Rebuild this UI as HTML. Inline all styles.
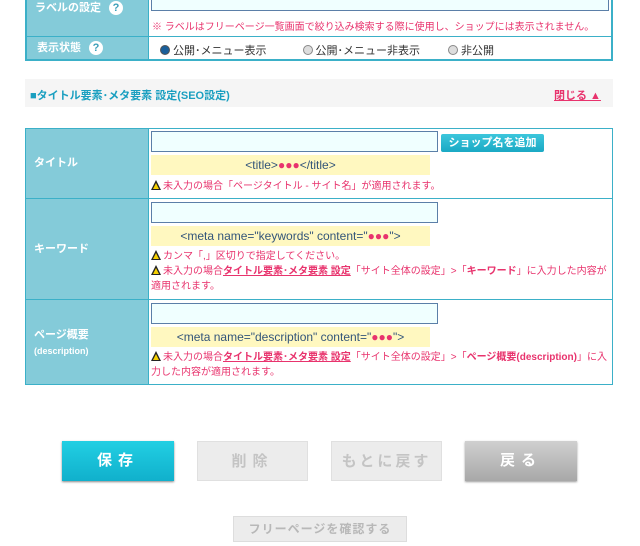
<!DOCTYPE html>
<html><head><meta charset="utf-8"><style>
*{margin:0;padding:0;box-sizing:border-box}
body{width:640px;height:546px;background:#fff;position:relative;overflow:hidden;font-family:"Liberation Sans","Noto Sans CJK JP",sans-serif;font-size:11px}
.a{position:absolute}
.lbl{background:#84cbd9;color:#fff;font-weight:bold;font-size:11px}
.q{display:inline-block;width:14px;height:14px;border-radius:50%;background:#fff;color:#3a9fb8;font-size:11px;text-align:center;line-height:14px;font-weight:bold;margin-left:8px}
.inp{background:#f0ffff;border:1px solid #5b7fa8}
.yel{background:#fff8c0;color:#33557a;font-size:12px;text-align:center;line-height:20px}
.dots{color:#e8336d}
.warn{color:#e8336d;font-size:10px;line-height:15px}
.tri{display:inline-block;width:0;height:0;border-left:5px solid transparent;border-right:5px solid transparent;border-bottom:10px solid #222;position:relative;top:1px;margin-right:2px}
.tri:after{content:"";position:absolute;left:-3px;top:3px;border-left:3px solid transparent;border-right:3px solid transparent;border-bottom:6px solid #f6d000}
u{text-decoration:underline;text-decoration-color:#e8336d;font-weight:bold}
.btn{position:absolute;height:40px;text-align:center;line-height:40px;font-size:15px;font-weight:bold;letter-spacing:6px;color:#fff}
.rad{display:inline-block;width:10px;height:10px;border-radius:50%;border:1px solid #888;background:#ddd;vertical-align:-1px;margin-right:3px}
</style></head><body>
<!-- top table -->
<div class="a" style="left:25px;top:0;width:588px;height:61px;border:2px solid #3bb0c8;border-top:none;background:#fff"></div>
<div class="a lbl" style="left:27px;top:0;width:122px;height:36px;padding:0 0 0 8px;line-height:16px">ラベルの設定<span class="q">?</span></div>
<div class="a" style="left:27px;top:36px;width:586px;height:1px;background:#3bb0c8"></div>
<div class="a lbl" style="left:27px;top:37px;width:122px;height:22px;padding-left:10px;line-height:22px">表示状態<span class="q">?</span></div>
<div class="a" style="left:148px;top:0;width:1px;height:60px;background:#3bb0c8"></div>
<div class="a inp" style="left:151px;top:-2px;width:458px;height:13px"></div>
<div class="a" style="left:152px;top:18px;color:#e8336d;font-size:10px">※ ラベルはフリーページ一覧画面で絞り込み検索する際に使用し、ショップには表示されません。</div>
<div class="a" style="left:160px;top:42px;font-size:11px;color:#333;white-space:nowrap"><span class="rad" style="background:#1a5f9a;border-color:#555"></span>公開･メニュー表示<span style="display:inline-block;width:36px"></span><span class="rad"></span>公開･メニュー非表示<span style="display:inline-block;width:28px"></span><span class="rad"></span>非公開</div>
<!-- SEO bar -->
<div class="a" style="left:25px;top:79px;width:588px;height:28px;background:#f5f5f5"></div>
<div class="a" style="left:30px;top:87px;color:#1a9fc0;font-weight:bold;font-size:11px">■タイトル要素･メタ要素 設定(SEO設定)</div>
<div class="a" style="left:554px;top:87px;color:#e8336d;font-weight:bold;font-size:11px;text-decoration:underline">閉じる ▲</div>
<!-- SEO table -->
<div class="a" style="left:25px;top:128px;width:588px;height:257px;border:1px solid #3bb0c8"></div>
<div class="a lbl" style="left:26px;top:129px;width:122px;height:69px;padding-left:8px;line-height:69px">タイトル</div>
<div class="a" style="left:26px;top:198px;width:586px;height:1px;background:#3bb0c8"></div>
<div class="a lbl" style="left:26px;top:199px;width:122px;height:100px;padding-left:8px;line-height:100px">キーワード</div>
<div class="a" style="left:26px;top:299px;width:586px;height:1px;background:#3bb0c8"></div>
<div class="a lbl" style="left:26px;top:300px;width:122px;height:84px;padding:27px 0 0 8px;line-height:16px">ページ概要<br><span style="font-size:9px">(description)</span></div>
<div class="a" style="left:148px;top:129px;width:1px;height:255px;background:#3bb0c8"></div>
<div class="a inp" style="left:151px;top:131px;width:287px;height:21px"></div>
<div class="a" style="left:441px;top:134px;width:103px;height:18px;background:linear-gradient(#3cc6dc,#1aa9c4);color:#fff;font-weight:bold;font-size:11px;text-align:center;line-height:18px;border-radius:2px">ショップ名を追加</div>
<div class="a yel" style="left:151px;top:155px;width:279px;height:20px">&lt;title&gt;<span class="dots">●●●</span>&lt;/title&gt;</div>
<div class="a warn" style="left:151px;top:179px"><span class="tri"></span>未入力の場合「ページタイトル - サイト名」が適用されます。</div>
<div class="a inp" style="left:151px;top:202px;width:287px;height:21px"></div>
<div class="a yel" style="left:151px;top:226px;width:279px;height:20px">&lt;meta name="keywords" content="<span class="dots">●●●</span>"&gt;</div>
<div class="a warn" style="left:151px;top:249px;width:460px"><span class="tri"></span>カンマ「,」区切りで指定してください。<br><span class="tri"></span>未入力の場合<u>タイトル要素･メタ要素 設定</u>「サイト全体の設定」&gt;「<b>キーワード</b>」に入力した内容が適用されます。</div>
<div class="a inp" style="left:151px;top:303px;width:287px;height:21px"></div>
<div class="a yel" style="left:151px;top:327px;width:279px;height:20px">&lt;meta name="description" content="<span class="dots">●●●</span>"&gt;</div>
<div class="a warn" style="left:151px;top:350px;width:460px"><span class="tri"></span>未入力の場合<u>タイトル要素･メタ要素 設定</u>「サイト全体の設定」&gt;「<b>ページ概要(description)</b>」に入力した内容が適用されます。</div>
<!-- buttons -->
<div class="btn" style="left:62px;top:441px;width:112px;background:linear-gradient(#22cfe3,#10b0cc);box-shadow:0 1px 2px #888">保存</div>
<div class="btn" style="left:197px;top:441px;width:111px;background:#ececec;color:#c4c4c4;border:1px solid #e0e0e0">削除</div>
<div class="btn" style="left:331px;top:441px;width:111px;background:#ececec;color:#c4c4c4;border:1px solid #e0e0e0;letter-spacing:3px">もとに戻す</div>
<div class="btn" style="left:465px;top:441px;width:112px;background:linear-gradient(#d0d0d0,#a8a8a8);box-shadow:0 1px 2px #999">戻る</div>
<div class="a" style="left:233px;top:516px;width:174px;height:26px;background:#ececec;border:1px solid #ddd;color:#b8b8b8;font-weight:bold;font-size:12px;text-align:center;line-height:24px;letter-spacing:1px">フリーページを確認する</div>
</body></html>
